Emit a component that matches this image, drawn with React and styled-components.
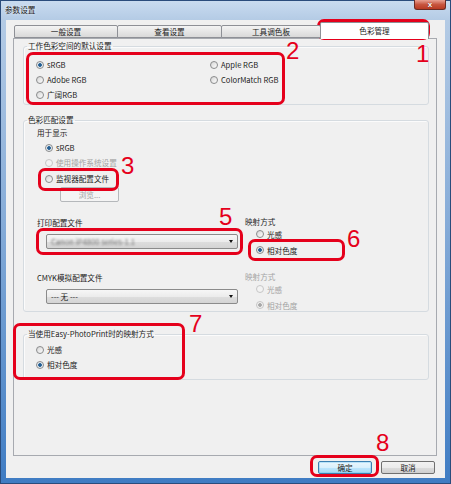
import React from "react";
import styled, { createGlobalStyle } from "styled-components";

const Global = createGlobalStyle`
  html, body { margin: 0; padding: 0; background: #fff; }
  body { font-family: "Noto Sans CJK SC", "Liberation Sans", sans-serif; }
`;

const RED = "#e5001b";

const Window = styled.div`
  position: relative;
  width: 451px;
  height: 484px;
  box-sizing: border-box;
  display: flex;
  flex-direction: column;
  overflow: hidden;
  background: linear-gradient(#cadcf0 0px, #b4cbe5 20px, #86acd8 220px, #3f7cc3 484px);
  box-shadow: inset 0 0 0 1px #2a4c7c;
`;

const TitleBar = styled.div`
  height: 20px;
  flex: none;
  display: flex;
  align-items: flex-start;
  padding: 0 5px 0 5px;
`;

const Title = styled.span`
  font-size: 7.6px;
  line-height: 20px;
  color: #1b1b1b;
  text-shadow: 0 0 3px #fff;
`;

const Close = styled.div`
  margin-left: auto;
  width: 32px;
  height: 10px;
  box-sizing: border-box;
  border: 1px solid #6b2b24;
  border-top: none;
  border-radius: 0 0 3px 3px;
  background: linear-gradient(#e9a193, #c7553f 50%, #b93a22);
  color: #fff;
  font-family: "Liberation Sans", sans-serif;
  font-size: 8px;
  font-weight: bold;
  line-height: 9px;
  text-align: center;
  text-shadow: 0 0 1px #5a1208;
`;

const Client = styled.div`
  flex: 1;
  margin: 0 6px 6px 6px;
  background: #f0f0f0;
  display: flex;
  flex-direction: column;
`;

const TabArea = styled.div`
  margin: 2px 0 0 7px;
  width: 424px;
`;

const TabStrip = styled.div`
  display: flex;
  align-items: flex-end;
  height: 16px;
  padding-left: 1px;
`;

const Tab = styled.div`
  position: relative;
  z-index: ${(p) => (p.$active ? 2 : 1)};
  width: ${(p) => p.$w}px;
  height: ${(p) => (p.$active ? 17 : 13)}px;
  margin-left: ${(p) => (p.$first ? 0 : -1)}px;
  margin-bottom: ${(p) => (p.$active ? -1 : 0)}px;
  box-sizing: border-box;
  border: 1px solid #8e9096;
  border-bottom: ${(p) => (p.$active ? "none" : "1px solid #8e9096")};
  border-radius: 2px 2px 0 0;
  background: ${(p) => (p.$active ? "#fff" : "linear-gradient(#f4f4f4, #e6e6e6 50%, #d9d9d9)")};
  font-size: 7.6px;
  line-height: ${(p) => (p.$active ? 15 : 11)}px;
  text-align: center;
  color: #1b1b1b;
`;

const Panel = styled.div`
  height: 418px;
  box-sizing: border-box;
  border: 1px solid #a7aab0;
  background: #f0f0f0;
  padding: 2px 7px 0 9px;
`;

const Group = styled.fieldset`
  margin: ${(p) => p.$mt || 0}px 0 0 0;
  padding: 0;
  border: 1px solid #d5dbe0;
  border-radius: 3px;
  min-width: 0;
  box-shadow: inset 1px 1px 0 #fbfbfb;
`;

const Legend = styled.legend`
  margin-left: 3px;
  padding: 0 1px;
  font-size: 7.6px;
  line-height: 10px;
  color: #1b1b1b;
`;

const GroupBody = styled.div`
  padding: ${(p) => p.$pad};
`;

const TwoCols = styled.div`
  display: grid;
  grid-template-columns: ${(p) => p.$cols};
  row-gap: ${(p) => p.$gap || 0}px;
`;

const Col = styled.div`
  display: flex;
  flex-direction: column;
  padding-left: ${(p) => p.$indent || 0}px;
`;

const Text = styled.div`
  font-size: 7.6px;
  line-height: ${(p) => p.$lh || 15}px;
  color: ${(p) => (p.$off ? "#a3a3a3" : "#1b1b1b")};
  white-space: nowrap;
`;

const RadioRow = styled.div`
  display: flex;
  align-items: center;
  gap: 3px;
  height: ${(p) => p.$h || 15}px;
  margin-left: ${(p) => p.$indent || 0}px;
  margin-top: ${(p) => p.$mt || 0}px;
`;

const Dot = styled.span`
  flex: none;
  width: 8px;
  height: 8px;
  box-sizing: border-box;
  border-radius: 50%;
  border: 1px solid ${(p) => (p.$off ? "#c6c6c6" : "#8a8b8c")};
  background: ${(p) =>
    p.$on
      ? `radial-gradient(circle, ${p.$off ? "#a8a8a8" : "#245f93"} 0 1.5px, ${p.$off ? "#f2f2f2" : "#e8edf1"} 2.2px)`
      : p.$off
      ? "#f3f3f3"
      : "linear-gradient(135deg, #d6d6d6, #fdfdfd)"};
`;

const Radio = ({ label, on, off, ...rest }) => (
  <RadioRow {...rest}>
    <Dot $on={on} $off={off} />
    <Text $off={off}>{label}</Text>
  </RadioRow>
);

const PushButton = styled.div`
  width: ${(p) => p.$w}px;
  height: ${(p) => p.$h}px;
  box-sizing: border-box;
  margin: ${(p) => p.$m || 0};
  border: 1px solid ${(p) => (p.$off ? "#b5b8bb" : p.$def ? "#3c7fb1" : "#707070")};
  border-radius: 2px;
  background: ${(p) =>
    p.$off
      ? "#f4f4f4"
      : p.$def
      ? "linear-gradient(#eaf6fd, #d9f0fc 50%, #bee6fd 51%, #a7d9f5)"
      : "linear-gradient(#f2f2f2, #ebebeb 50%, #dddddd 51%, #cfcfcf)"};
  box-shadow: ${(p) => (p.$def ? "inset 0 0 0 1px #5fc0ef55" : "none")};
  font-size: 7.6px;
  line-height: ${(p) => p.$h - 2}px;
  text-align: center;
  color: ${(p) => (p.$off ? "#a3a3a3" : "#1b1b1b")};
`;

const Combo = styled.div`
  display: flex;
  align-items: center;
  width: 192px;
  height: 15px;
  box-sizing: border-box;
  margin: 4px 0 0 9px;
  padding: 0 4px 0 4px;
  border: 1px solid #8b8b8b;
  border-radius: 2px;
  background: linear-gradient(#f6f6f6, #ececec 50%, #dedede 51%, #d4d4d4);
`;

const ComboText = styled.span`
  font-size: 7.6px;
  color: ${(p) => (p.$blur ? "#6d6d6d" : "#1b1b1b")};
  filter: ${(p) => (p.$blur ? "blur(0.8px)" : "none")};
  white-space: pre;
`;

const Arrow = styled.span`
  margin-left: auto;
  width: 0;
  height: 0;
  border-left: 2.5px solid transparent;
  border-right: 2.5px solid transparent;
  border-top: 3px solid #111;
`;

const ButtonRow = styled.div`
  display: flex;
  justify-content: flex-end;
  gap: 9px;
  margin-top: 5px;
  padding-right: 10px;
`;

const Mark = styled.div`
  position: absolute;
  box-sizing: border-box;
  border: 3px solid ${RED};
  border-radius: 7px;
  pointer-events: none;
`;

const Num = styled.div`
  position: absolute;
  font-family: "Liberation Sans", sans-serif;
  font-size: 24px;
  line-height: 1;
  color: ${RED};
`;

const marks = [
  { x: 317, y: 19, w: 113, h: 21 },
  { x: 26, y: 52, w: 259, h: 53 },
  { x: 38, y: 168, w: 81, h: 23 },
  { x: 36, y: 228, w: 207, h: 27 },
  { x: 248, y: 239, w: 97, h: 22 },
  { x: 13, y: 323, w: 172, h: 57 },
  { x: 310, y: 455, w: 69, h: 22 },
];

const nums = [
  { n: "1", x: 416, y: 42 },
  { n: "2", x: 286, y: 39 },
  { n: "3", x: 121, y: 154 },
  { n: "5", x: 219, y: 205 },
  { n: "6", x: 347, y: 227 },
  { n: "7", x: 189, y: 312 },
  { n: "8", x: 376, y: 431 },
];

const tabs = [
  { label: "一般设置", w: 104 },
  { label: "查看设置", w: 105 },
  { label: "工具调色板", w: 100 },
  { label: "色彩管理", w: 109, active: true },
];

export default function App() {
  return (
    <>
      <Global />
      <Window>
        <TitleBar>
          <Title>参数设置</Title>
          <Close>x</Close>
        </TitleBar>
        <Client>
          <TabArea>
            <TabStrip>
              {tabs.map((t, i) => (
                <Tab key={t.label} $w={t.w} $first={i === 0} $active={t.active}>
                  {t.label}
                </Tab>
              ))}
            </TabStrip>
            <Panel>
              <Group>
                <Legend>工作色彩空间的默认设置</Legend>
                <GroupBody $pad="6px 0 2px 12px">
                  <TwoCols $cols="174px auto">
                    <Radio label="sRGB" on />
                    <Radio label="Apple RGB" />
                    <Radio label="Adobe RGB" />
                    <Radio label="ColorMatch RGB" />
                    <Radio label="广阔RGB" />
                  </TwoCols>
                </GroupBody>
              </Group>

              <Group $mt={10}>
                <Legend>色彩匹配设置</Legend>
                <GroupBody $pad="0 0 0 13px">
                  <Text>用于显示</Text>
                  <Radio label="sRGB" on $indent={8} />
                  <Radio label="使用操作系统设置" off $indent={8} />
                  <Radio label="监视器配置文件" $indent={8} $mt={1} />
                  <PushButton $w={59} $h={15} $m="1px 0 0 23px" $off>
                    浏览...
                  </PushButton>
                  <TwoCols $cols="208px auto" $gap={14} style={{ marginTop: 13 }}>
                    <Col>
                      <Text>打印配置文件</Text>
                      <Combo>
                        <ComboText $blur>Canon iP4800 series-1.1</ComboText>
                        <Arrow />
                      </Combo>
                    </Col>
                    <Col>
                      <Text $lh={13}>映射方式</Text>
                      <Radio label="光感" $h={12} $indent={11} />
                      <Radio label="相对色度" on $h={12} $indent={11} $mt={4} />
                    </Col>
                    <Col>
                      <Text>CMYK模拟配置文件</Text>
                      <Combo>
                        <ComboText>{"--- 无 ---"}</ComboText>
                        <Arrow />
                      </Combo>
                    </Col>
                    <Col>
                      <Text $lh={13} $off>
                        映射方式
                      </Text>
                      <Radio label="光感" off $h={12} $indent={11} />
                      <Radio label="相对色度" on off $h={12} $indent={11} $mt={4} />
                    </Col>
                  </TwoCols>
                </GroupBody>
              </Group>

              <Group $mt={17}>
                <Legend>当使用Easy-PhotoPrint时的映射方式</Legend>
                <GroupBody $pad="3px 0 7px 12px">
                  <Radio label="光感" />
                  <Radio label="相对色度" on />
                </GroupBody>
              </Group>
            </Panel>
          </TabArea>
          <ButtonRow>
            <PushButton $w={54} $h={13} $def>
              确定
            </PushButton>
            <PushButton $w={54} $h={13}>
              取消
            </PushButton>
          </ButtonRow>
        </Client>

        {marks.map((m, i) => (
          <Mark key={i} style={{ left: m.x, top: m.y, width: m.w, height: m.h }} />
        ))}
        {nums.map((n) => (
          <Num key={n.n} style={{ left: n.x, top: n.y }}>
            {n.n}
          </Num>
        ))}
      </Window>
    </>
  );
}
